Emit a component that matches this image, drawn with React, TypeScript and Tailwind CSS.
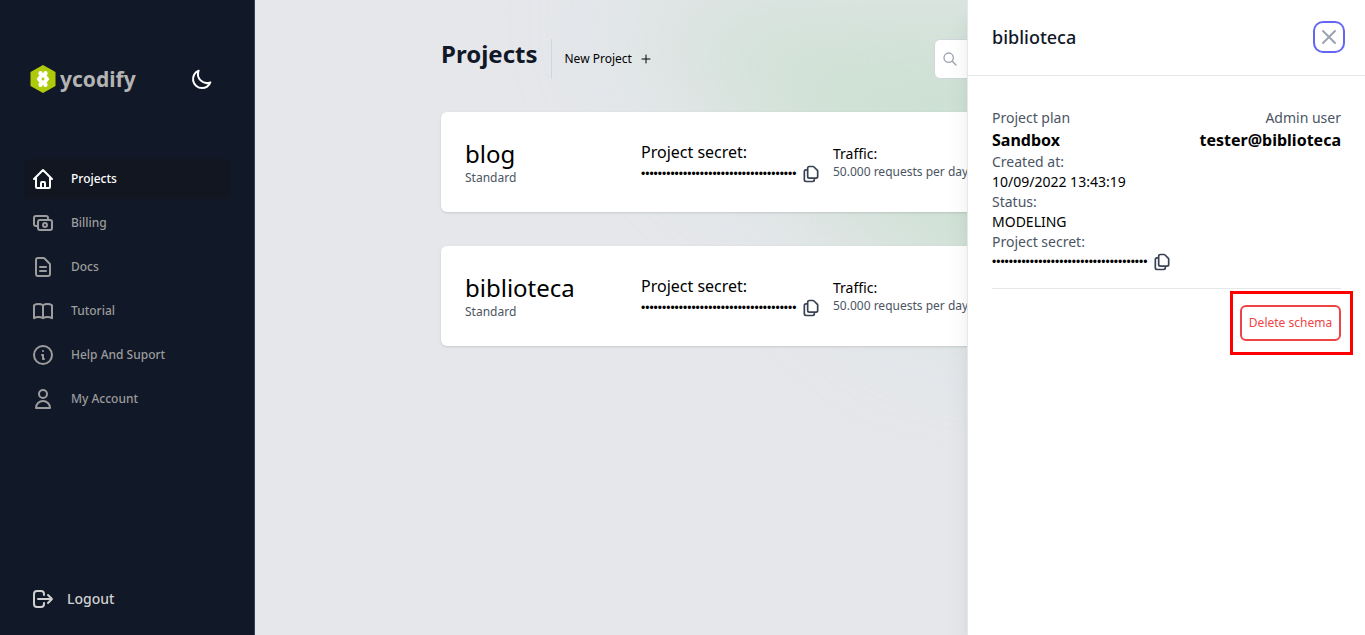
import React from "react";
import clsx from "clsx";

const paths = {
  home: "M3 12l2-2m0 0l7-7 7 7M5 10v10a1 1 0 001 1h3m10-11l2 2m-2-2v10a1 1 0 01-1 1h-3m-6 0a1 1 0 001-1v-4a1 1 0 011-1h2a1 1 0 011 1v4a1 1 0 001 1m-6 0h6",
  cash: "M17 9V7a2 2 0 00-2-2H5a2 2 0 00-2 2v6a2 2 0 002 2h2m2 4h10a2 2 0 002-2v-6a2 2 0 00-2-2H9a2 2 0 00-2 2v6a2 2 0 002 2zm7-5a2 2 0 11-4 0 2 2 0 014 0z",
  document:
    "M9 12h6m-6 4h6m2 5H7a2 2 0 01-2-2V5a2 2 0 012-2h5.586a1 1 0 01.707.293l5.414 5.414a1 1 0 01.293.707V19a2 2 0 01-2 2z",
  book: "M12 6.253v13m0-13C10.832 5.477 9.246 5 7.5 5S4.168 5.477 3 6.253v13C4.168 18.477 5.754 18 7.5 18s3.332.477 4.5 1.253m0-13C13.168 5.477 14.754 5 16.5 5c1.747 0 3.332.477 4.5 1.253v13C19.832 18.477 18.247 18 16.5 18c-1.746 0-3.332.477-4.5 1.253",
  info: "M13 16h-1v-4h-1m1-4h.01M21 12a9 9 0 11-18 0 9 9 0 0118 0z",
  user: "M16 7a4 4 0 11-8 0 4 4 0 018 0zM12 14a7 7 0 00-7 7h14a7 7 0 00-7-7z",
  moon: "M20.354 15.354A9 9 0 018.646 3.646 9.003 9.003 0 0012 21a9.003 9.003 0 008.354-5.646z",
  logout:
    "M17 16l4-4m0 0l-4-4m4 4H7m6 4v1a3 3 0 01-3 3H6a3 3 0 01-3-3V7a3 3 0 013-3h4a3 3 0 013 3v1",
  copy: "M8 7v8a2 2 0 002 2h6M8 7V5a2 2 0 012-2h4.586a1 1 0 01.707.293l4.414 4.414a1 1 0 01.293.707V15a2 2 0 01-2 2h-2M8 7H6a2 2 0 00-2 2v10a2 2 0 002 2h8a2 2 0 002-2v-2",
  search: "M21 21l-6-6m2-5a7 7 0 11-14 0 7 7 0 0114 0z",
  plus: "M12 4v16M4 12h16",
  close: "M6 18L18 6M6 6l12 12",
};

type IconName = keyof typeof paths;

function Icon({ name, className, stroke = 2 }: { name: IconName; className?: string; stroke?: number }) {
  return (
    <svg
      viewBox="0 0 24 24"
      fill="none"
      stroke="currentColor"
      strokeWidth={stroke}
      strokeLinecap="round"
      strokeLinejoin="round"
      aria-hidden="true"
      className={clsx("shrink-0", className)}
    >
      <path d={paths[name]} />
    </svg>
  );
}

function Logo() {
  return (
    <a href="#" className="flex items-center gap-1">
      <svg viewBox="0 0 26 28" className="h-7 w-[26px] shrink-0" aria-hidden="true">
        <path d="M13 0 25.5 7v14L13 28 .5 21V7z" fill="#afca0b" />
        <g fill="#fff">
          <path d="M10 8.500h6v11h-6z" />
          <circle cx="10.600" cy="8.300" r="2.200" />
          <circle cx="15.400" cy="8.300" r="2.200" />
          <path d="M6.600 14l3-4h6.800l3 4-3 4H9.600z" />
          <circle cx="10.600" cy="19.700" r="2.200" />
          <circle cx="15.400" cy="19.700" r="2.200" />
        </g>
        <circle cx="13" cy="14" r="1.400" fill="#afca0b" />
        <path d="M12.300 6h1.400L13 7.800zM12.300 22h1.400L13 20.200z" fill="#afca0b" />
      </svg>
      <span className="text-[21px] leading-7 font-bold text-[#b4b4b4]">ycodify</span>
    </a>
  );
}

const navItems: { label: string; icon: IconName; active?: boolean }[] = [
  { label: "Projects", icon: "home", active: true },
  { label: "Billing", icon: "cash" },
  { label: "Docs", icon: "document" },
  { label: "Tutorial", icon: "book" },
  { label: "Help And Suport", icon: "info" },
  { label: "My Account", icon: "user" },
];

function Sidebar() {
  return (
    <aside className="flex w-[255px] shrink-0 flex-col border-r border-gray-700 bg-[#111827] px-6 pt-[65px] pb-6">
      <div className="flex items-center justify-between pr-4 pl-[6px]">
        <Logo />
        <button type="button" aria-label="Toggle dark mode" className="text-white">
          <Icon name="moon" className="size-6" />
        </button>
      </div>
      <nav className="mt-[66px] flex flex-col gap-1">
        {navItems.map((item) => (
          <a
            key={item.label}
            href="#"
            aria-current={item.active ? "page" : undefined}
            className={clsx(
              "flex h-10 items-center gap-4 rounded-md px-[7px] text-xs font-medium",
              item.active ? "bg-[#111621] text-white" : "text-[#9c9c9c]",
            )}
          >
            <Icon name={item.icon} className="size-6" />
            {item.label}
          </a>
        ))}
      </nav>
      <a href="#" className="mt-auto flex items-center gap-3 px-[7px] text-sm font-medium text-[#d0d0d0]">
        <Icon name="logout" className="size-6" />
        Logout
      </a>
    </aside>
  );
}

function Secret() {
  return (
    <div className="flex h-5 items-center">
      <span className="w-40 font-['Liberation_Sans',sans-serif] text-xs text-black">{"•".repeat(37)}</span>
      <button type="button" aria-label="Copy project secret" className="text-[#374151]">
        <Icon name="copy" className="size-5" />
      </button>
    </div>
  );
}

function ProjectCard({ name }: { name: string }) {
  return (
    <article className="grid h-[100px] grid-cols-[176px_192px_1fr] items-center rounded-md bg-white px-6 text-black shadow">
      <div>
        <h2 className="text-2xl">{name}</h2>
        <p className="text-xs text-[#4b5563]">Standard</p>
      </div>
      <div>
        <p className="text-base">Project secret:</p>
        <Secret />
      </div>
      <div>
        <p className="text-sm">Traffic:</p>
        <p className="text-xs text-[#4b5563]">50.000 requests per day</p>
      </div>
    </article>
  );
}

function Details() {
  return (
    <aside className="absolute inset-y-0 right-0 w-[398px] border-l border-gray-200 bg-white shadow-xl">
      <header className="flex h-[76px] items-center justify-between border-b border-gray-200 px-6 pb-[2px]">
        <h2 className="text-lg font-medium text-[#111827]">biblioteca</h2>
        <button
          type="button"
          aria-label="Close panel"
          className="rounded-md bg-white text-[#9ca3af] ring-2 ring-[#6366f1] ring-offset-2"
        >
          <Icon name="close" className="size-6" />
        </button>
      </header>
      <div className="px-6 pt-8 text-sm text-black">
        <div className="flex justify-between">
          <div>
            <p className="text-[#4b5563]">Project plan</p>
            <p className="text-base font-bold">Sandbox</p>
          </div>
          <div className="text-right">
            <p className="text-[#4b5563]">Admin user</p>
            <p className="text-base font-bold">tester@biblioteca</p>
          </div>
        </div>
        <p className="text-[#4b5563]">Created at:</p>
        <p>10/09/2022 13:43:19</p>
        <p className="text-[#4b5563]">Status:</p>
        <p>MODELING</p>
        <p className="text-[#4b5563]">Project secret:</p>
        <Secret />
        <div className="mt-4 flex justify-end border-t border-gray-200 pt-4">
          <div className="relative">
            <button
              type="button"
              className="h-9 w-[101px] rounded-md border-2 border-[#ef4444] text-xs whitespace-nowrap text-[#ef4444]"
            >
              Delete schema
            </button>
            <span className="pointer-events-none absolute -top-[14px] -right-3 -bottom-[14px] -left-[10px] border-3 border-[#ff0000]" />
          </div>
        </div>
      </div>
    </aside>
  );
}

export default function App() {
  return (
    <div className="relative flex min-h-screen overflow-hidden bg-[#e5e7eb] font-['Noto_Sans',sans-serif]">
      <Sidebar />
      <main className="relative flex-1 overflow-hidden pt-[39px]">
        <div className="pointer-events-none absolute top-1 left-[365px] blur-[60px]" aria-hidden="true">
          <div className="h-[300px] w-[600px] bg-[#cde0d3] [clip-path:polygon(0_0,100%_0,100%_100%,54%_100%)]" />
        </div>
        <div className="relative mx-auto w-full max-w-[738px]">
          <header className="flex h-10 items-center">
            <h1 className="pb-[10px] text-2xl font-bold text-[#111827]">Projects</h1>
            <button
              type="button"
              className="ml-[14px] flex h-10 items-center gap-2 border-l border-gray-300 pl-3 text-xs text-black"
            >
              New Project
              <Icon name="plus" className="size-3" />
            </button>
            <label className="ml-auto flex h-10 w-[245px] items-center gap-2 rounded-md border border-gray-300 bg-white px-[7px] text-[#9ca3af]">
              <Icon name="search" className="size-4" />
              <input type="search" aria-label="Search projects" className="w-full min-w-0 text-sm outline-none" />
            </label>
          </header>
          <div className="mt-[33px] flex flex-col gap-[34px]">
            <ProjectCard name="blog" />
            <ProjectCard name="biblioteca" />
          </div>
        </div>
      </main>
      <Details />
    </div>
  );
}
